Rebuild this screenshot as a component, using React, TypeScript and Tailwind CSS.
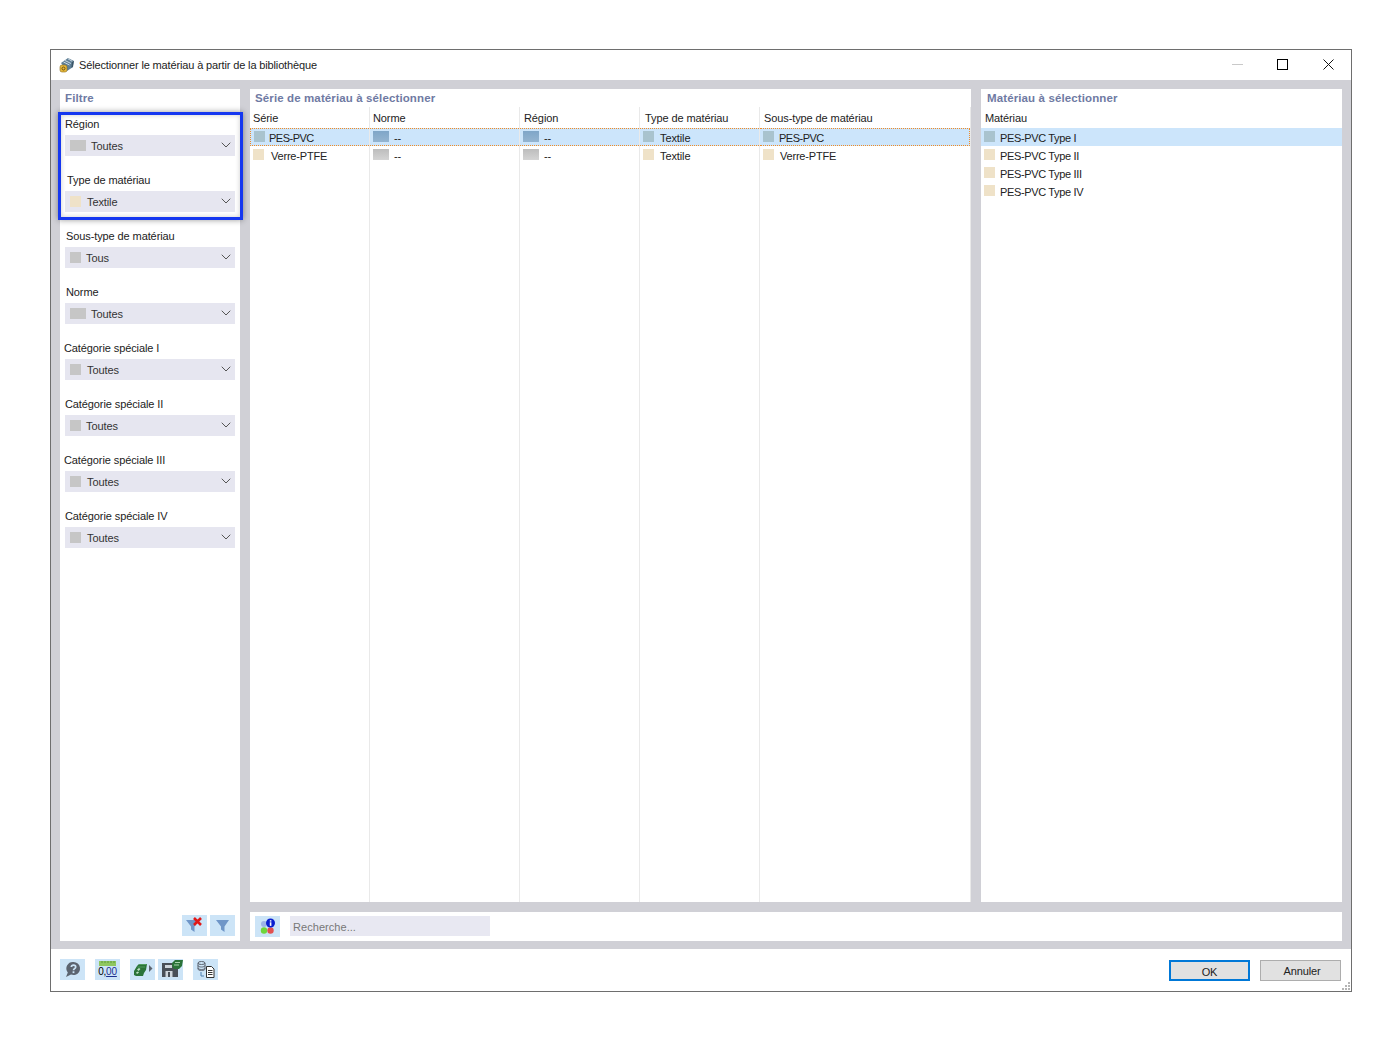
import { ChevronDown } from 'lucide-react';
import type { ReactNode } from 'react';

const GREY = 'bg-[#c6c6c6]';
const TAN = 'bg-[#efe2c8]';
const TEAL = 'bg-[#a9c3ce]';

const filters = [
    { label: 'Région', labelClass: 'ml-0', value: 'Toutes', swatch: `w-4 ${GREY}`, textClass: 'ml-[5px]' },
    { label: 'Type de matériau', labelClass: 'ml-[2px]', value: 'Textile', swatch: `w-[11px] ${TAN}`, textClass: 'ml-[6px]' },
    { label: 'Sous-type de matériau', labelClass: 'ml-[1px]', value: 'Tous', swatch: `w-[11px] ${GREY}`, textClass: 'ml-[5px]' },
    { label: 'Norme', labelClass: 'ml-[1px]', value: 'Toutes', swatch: `w-4 ${GREY}`, textClass: 'ml-[5px]' },
    { label: 'Catégorie spéciale I', labelClass: 'ml-[-1px]', value: 'Toutes', swatch: `w-[11px] ${GREY}`, textClass: 'ml-[6px]' },
    { label: 'Catégorie spéciale II', labelClass: 'ml-0', value: 'Toutes', swatch: `w-[11px] ${GREY}`, textClass: 'ml-[5px]' },
    { label: 'Catégorie spéciale III', labelClass: 'ml-[-1px]', value: 'Toutes', swatch: `w-[11px] ${GREY}`, textClass: 'ml-[6px]' },
    { label: 'Catégorie spéciale IV', labelClass: 'ml-0', value: 'Toutes', swatch: `w-[11px] ${GREY}`, textClass: 'ml-[6px]' },
];

const columns = [
    {
        title: 'Série', width: 'w-[120px]', titleClass: 'pl-[3px]',
        cells: [
            { swatch: `w-[11px] ${TEAL}`, text: 'PES-PVC', gap: 'ml-[4px] tracking-[-0.5px]' },
            { swatch: `w-[11px] ${TAN}`, text: 'Verre-PTFE', gap: 'ml-[7px] tracking-[-0.2px]' },
        ],
    },
    {
        title: 'Norme', width: 'w-[150px]', titleClass: 'pl-[3px]',
        cells: [
            { swatch: 'w-4 bg-gradient-to-b from-[#7fa6c8] to-[#94b4d0]', text: '--', gap: 'ml-[5px]' },
            { swatch: 'w-4 bg-gradient-to-b from-[#bdbdbd] to-[#d4d4d4]', text: '--', gap: 'ml-[5px]' },
        ],
    },
    {
        title: 'Région', width: 'w-[120px]', titleClass: 'pl-[4px]',
        cells: [
            { swatch: 'w-4 bg-gradient-to-b from-[#7fa6c8] to-[#94b4d0]', text: '--', gap: 'ml-[5px]' },
            { swatch: 'w-4 bg-gradient-to-b from-[#bdbdbd] to-[#d4d4d4]', text: '--', gap: 'ml-[5px]' },
        ],
    },
    {
        title: 'Type de matériau', width: 'w-[120px]', titleClass: 'pl-[5px]',
        cells: [
            { swatch: `w-[11px] ${TEAL}`, text: 'Textile', gap: 'ml-[6px]' },
            { swatch: `w-[11px] ${TAN}`, text: 'Textile', gap: 'ml-[6px]' },
        ],
    },
    {
        title: 'Sous-type de matériau', width: 'w-[211px]', titleClass: 'pl-[4px]',
        cells: [
            { swatch: `w-[11px] ${TEAL}`, text: 'PES-PVC', gap: 'ml-[5px] tracking-[-0.5px]' },
            { swatch: `w-[11px] ${TAN}`, text: 'Verre-PTFE', gap: 'ml-[6px] tracking-[-0.2px]' },
        ],
    },
];

const materials = ['PES-PVC Type I', 'PES-PVC Type II', 'PES-PVC Type III', 'PES-PVC Type IV'];

function IconButton({ children, className = '' }: { children: ReactNode; className?: string }) {
    return (
        <button className={`flex h-[21px] w-[25px] items-center justify-center bg-[#cce4f7] ${className}`}>
            {children}
        </button>
    );
}

function PanelTitle({ children, className = '' }: { children: ReactNode; className?: string }) {
    return (
        <div className={`h-[18px] text-[11.5px] leading-[18px] font-bold tracking-[0.12px] text-[#6f7aa3] ${className}`}>
            {children}
        </div>
    );
}

function FilterIcon({ className = '' }: { className?: string }) {
    return (
        <svg width="13" height="12" viewBox="0 0 13 12" className={className}>
            <path d="M0 0h13L8.500 6.500V12L5 9.500V6.500z" fill="#6f96c8" />
        </svg>
    );
}

function App() {
    return (
        <div className="min-h-[1050px] bg-white pt-[49px] pl-[50px] font-['Liberation_Sans',Arial,sans-serif] text-[11px] tracking-[-0.1px] text-[#222]">
            <div className="relative flex h-[943px] w-[1302px] flex-col border border-[#6e6e6e] bg-white">
                {/* Title bar */}
                <div className="flex h-[30px] shrink-0 items-center pl-[8px]">
                    <svg width="16" height="16" viewBox="0 0 16 16" className="mt-[-1px]">
                        <path d="M2 6l7-5 6 3-1 6-6 4z" fill="#5f7f96" />
                        <path d="M6 3.500l6 3M4.500 5l6 3M9 1.800l5 3" stroke="#c9d8e2" strokeWidth="1" />
                        <path d="M13 4.500l1.800-.5-1 6-1.400.8z" fill="#3b5567" />
                        <rect x="1" y="8" width="7" height="7" rx="2" fill="#e8b93a" stroke="#8a6a1a" strokeWidth=".6" />
                        <circle cx="4.500" cy="11.500" r="1.500" fill="none" stroke="#6b4f10" strokeWidth="1" />
                    </svg>
                    <span className="ml-[4px] text-[11px] tracking-[-0.14px] text-[#1c1c1c]">
                        Sélectionner le matériau à partir de la bibliothèque
                    </span>
                    <div className="mt-[-2px] ml-auto flex items-center">
                        <div className="h-px w-[11px] bg-[#c9c9c9]" />
                        <div className="ml-[34px] h-[11px] w-[11px] border border-black" />
                        <svg width="11" height="11" viewBox="0 0 11 11" className="mr-[17px] ml-[35px]">
                            <path d="M0.500 0.500l10 10M10.500 0.500l-10 10" stroke="#111" strokeWidth="1" />
                        </svg>
                    </div>
                </div>

                {/* Main area */}
                <div className="flex h-[869px] shrink-0 gap-[10px] bg-[#d0d0d6] pt-[9px] pr-[9px] pb-[8px] pl-[9px]">
                    {/* Filter panel */}
                    <div className="flex w-[180px] shrink-0 flex-col bg-white">
                        <PanelTitle className="pl-[5px]">Filtre</PanelTitle>
                        <div className="flex flex-col gap-[15px] px-[5px] pt-[8px]">
                            {filters.map((f) => (
                                <div key={f.label} className="flex flex-col">
                                    <div className={`h-[20px] pt-[1px] leading-[16px] ${f.labelClass}`}>{f.label}</div>
                                    <div className="flex h-[21px] items-center bg-[#e6e6f0] pr-px pl-[5px]">
                                        <span className={`h-[11px] ${f.swatch}`} />
                                        <span className={`mt-[2px] ${f.textClass} text-[#333]`}>{f.value}</span>
                                        <ChevronDown className="mt-[-1px] ml-auto h-4 w-4 text-[#555]" strokeWidth={1.5} />
                                    </div>
                                </div>
                            ))}
                        </div>
                        <div className="mt-auto flex justify-end gap-[3px] pr-[5px] pb-[5px]">
                            <IconButton className="relative">
                                <FilterIcon className="mr-[4px]" />
                                <svg width="9" height="9" viewBox="0 0 9 9" className="absolute top-[2px] right-[5px]">
                                    <path d="M1 1l7 7M8 1l-7 7" stroke="#e01818" strokeWidth="2.600" />
                                </svg>
                            </IconButton>
                            <IconButton>
                                <FilterIcon />
                            </IconButton>
                        </div>
                    </div>

                    {/* Right column */}
                    <div className="flex w-[1092px] flex-col gap-[10px]">
                        <div className="flex h-[813px] gap-[10px]">
                            {/* Series table */}
                            <div className="flex w-[721px] shrink-0 flex-col bg-white">
                                <PanelTitle className="pl-[5px]">Série de matériau à sélectionner</PanelTitle>
                                <div className="flex flex-1">
                                    {columns.map((col, i) => (
                                        <div key={col.title} className={`flex flex-col border-r border-[#e9e9e9] ${col.width}`}>
                                            <div className={`h-[21px] leading-[22px] ${col.titleClass}`}>{col.title}</div>
                                            {col.cells.map((cell, r) => (
                                                <div
                                                    key={r}
                                                    className={`flex h-[18px] items-start pl-[3px] ${r === 0 ? 'border-y border-dotted border-[#f08c28] bg-[#cce5fb]' : ''} ${r === 0 && i === 0 ? 'border-l' : ''} ${r === 0 && i === columns.length - 1 ? 'border-r' : ''}`}
                                                >
                                                    <span className={`h-[11px] shrink-0 ${r === 0 ? 'mt-[2px]' : 'mt-[3px]'} ${cell.swatch}`} />
                                                    <span className={`${r === 0 ? 'leading-[18px]' : 'leading-[20px]'} ${cell.gap}`}>{cell.text}</span>
                                                </div>
                                            ))}
                                        </div>
                                    ))}
                                </div>
                            </div>

                            {/* Material list */}
                            <div className="flex w-[361px] shrink-0 flex-col bg-white">
                                <PanelTitle className="pl-[6px]">Matériau à sélectionner</PanelTitle>
                                <div className="h-[21px] pl-[4px] leading-[22px]">Matériau</div>
                                {materials.map((m, i) => (
                                    <div key={m} className={`flex h-[18px] pl-[3px] ${i === 0 ? 'bg-[#cce5fb]' : ''}`}>
                                        <span className={`mt-[3px] h-[11px] w-[11px] ${i === 0 ? TEAL : TAN}`} />
                                        <span className="ml-[5px] leading-[20px] tracking-[-0.35px]">{m}</span>
                                    </div>
                                ))}
                            </div>
                        </div>

                        {/* Search bar */}
                        <div className="flex h-[29px] items-center bg-white pl-[5px]">
                            <IconButton>
                                <svg width="17" height="17" viewBox="0 0 17 17">
                                    <circle cx="5" cy="6" r="3" fill="#9db4e8" />
                                    <circle cx="5" cy="12.500" r="3.200" fill="#6fd63c" />
                                    <circle cx="11.500" cy="12.500" r="3.200" fill="#e25050" />
                                    <circle cx="11.500" cy="5" r="4.500" fill="#0a1fd0" />
                                    <rect x="10.800" y="4.300" width="1.600" height="3.600" fill="#fff" />
                                    <rect x="10.800" y="2.200" width="1.600" height="1.400" fill="#fff" />
                                </svg>
                            </IconButton>
                            <div className="mb-[1px] ml-[10px] flex h-[20px] w-[200px] items-center bg-[#e8e8f2] pt-[2px] pl-[3px] tracking-[0.05px] text-[#777]">
                                Recherche...
                            </div>
                        </div>
                    </div>
                </div>

                {/* Bottom bar */}
                <div className="relative flex flex-1 items-start pt-[10px] pl-[9px]">
                    <IconButton>
                        <svg width="17" height="17" viewBox="0 0 17 17">
                            <path d="M9.500 1a6.500 6.500 0 0 1 2 12.700c-1.500.5-3 .4-4.500-.1L2 16l1.800-4.500A6.500 6.500 0 0 1 9.500 1z" fill="#5c6470" />
                            <path d="M7.300 6c.2-2.400 4.400-2.400 4.400 0 0 1.700-2.200 1.600-2.200 3.300" fill="none" stroke="#cce4f7" strokeWidth="1.700" />
                            <rect x="8.600" y="10.300" width="1.800" height="1.800" fill="#cce4f7" />
                        </svg>
                    </IconButton>
                    <IconButton className="relative ml-[10px]">
                        <svg width="17" height="5" viewBox="0 0 17 5" className="absolute top-[2px] left-[4px]">
                            <rect width="17" height="5" fill="#8fc760" />
                            <path d="M3 0v2M6 0v2M9 0v2M12 0v2M15 0v2" stroke="#5f9a3a" strokeWidth="1" />
                        </svg>
                        <span className="mt-[4px] text-[10px] leading-[12px] tracking-[-0.2px] text-black">
                            0,<span className="text-[#1c2f8f] underline">00</span>
                        </span>
                    </IconButton>
                    <IconButton className="ml-[10px]">
                        <svg width="25" height="21" viewBox="0 0 25 21">
                            <path d="M4 12l3-5 2-2h8l-1 6-2 3-1 3H6l-2-1z" fill="#2b7339" />
                            <path d="M9 5.500h7.500M7.500 8h7.500" stroke="#4f9d5e" strokeWidth="1" />
                            <path d="M7 10.500l2-1.500 1.500 1-2 2zM6 13.500l2-1 1 1-2 1.500z" fill="#bfe0c4" />
                            <path d="M19 6l3.500 3.500-3.500 3.500z" fill="#5c6470" />
                        </svg>
                    </IconButton>
                    <IconButton className="ml-[3px]">
                        <svg width="25" height="21" viewBox="0 0 25 21">
                            <path d="M4 4h13l3 3v11H4z" fill="#4a5058" />
                            <rect x="7" y="6" width="7" height="3" fill="#cfd6dc" />
                            <rect x="7.500" y="12" width="7" height="6" fill="#cfd6dc" />
                            <rect x="10" y="13" width="2" height="5" fill="#4a5058" />
                            <path d="M14 4l3-3h8l-1 6-3 3h-5l-2-3z" fill="#2b7339" />
                            <path d="M17 3.500h5M16 6h5" stroke="#a8d4ae" strokeWidth="1" />
                        </svg>
                    </IconButton>
                    <IconButton className="ml-[10px]">
                        <svg width="25" height="21" viewBox="0 0 25 21">
                            <ellipse cx="8.500" cy="4" rx="3.500" ry="1.500" fill="none" stroke="#5c6470" strokeWidth="1" />
                            <path d="M5 4v6c0 2 7 2 7 0V4M5 6.500c0 2 7 2 7 0M5 9c0 2 7 2 7 0" fill="none" stroke="#5c6470" strokeWidth="1" />
                            <path d="M8 13v4h3" fill="none" stroke="#4a7fb0" strokeWidth="1" />
                            <path d="M13.500 7.500h5l2.500 2.500v8.500h-7.500z" fill="#fff" stroke="#333" strokeWidth="1" />
                            <path d="M15 11.500h4.500M15 13.500h4.500M15 15.500h4.500" stroke="#333" strokeWidth="1" />
                        </svg>
                    </IconButton>
                    <div className="ml-auto flex items-center gap-[10px] pt-[1px] pr-[10px]">
                        <button className="h-[21px] w-[81px] border-2 border-[#0078d7] bg-[#e1e1e1] pt-[2px] text-[11px] leading-[17px] text-[#222]">OK</button>
                        <button className="h-[21px] w-[81px] border border-[#adadad] bg-[#e1e1e1] pt-[2px] pl-[3px] text-[11px] leading-[17px] text-[#222]">Annuler</button>
                    </div>
                    {/* resize grip */}
                    <svg width="9" height="9" viewBox="0 0 9 9" className="absolute right-[1px] bottom-[1px]">
                        <path d="M7 1h2v2H7zM4 4h2v2H4zM7 4h2v2H7zM1 7h2v2H1zM4 7h2v2H4zM7 7h2v2H7z" fill="#b5b5b5" />
                    </svg>
                </div>

                {/* Highlight annotation */}
                <div className="pointer-events-none absolute top-[62px] left-[7px] h-[108px] w-[185px] border-[3px] border-[#1537f0] shadow-[0_0_6px_rgba(0,0,0,0.4),inset_0_0_5px_rgba(0,0,0,0.2)]" />
            </div>
        </div>
    );
}

export default App;
